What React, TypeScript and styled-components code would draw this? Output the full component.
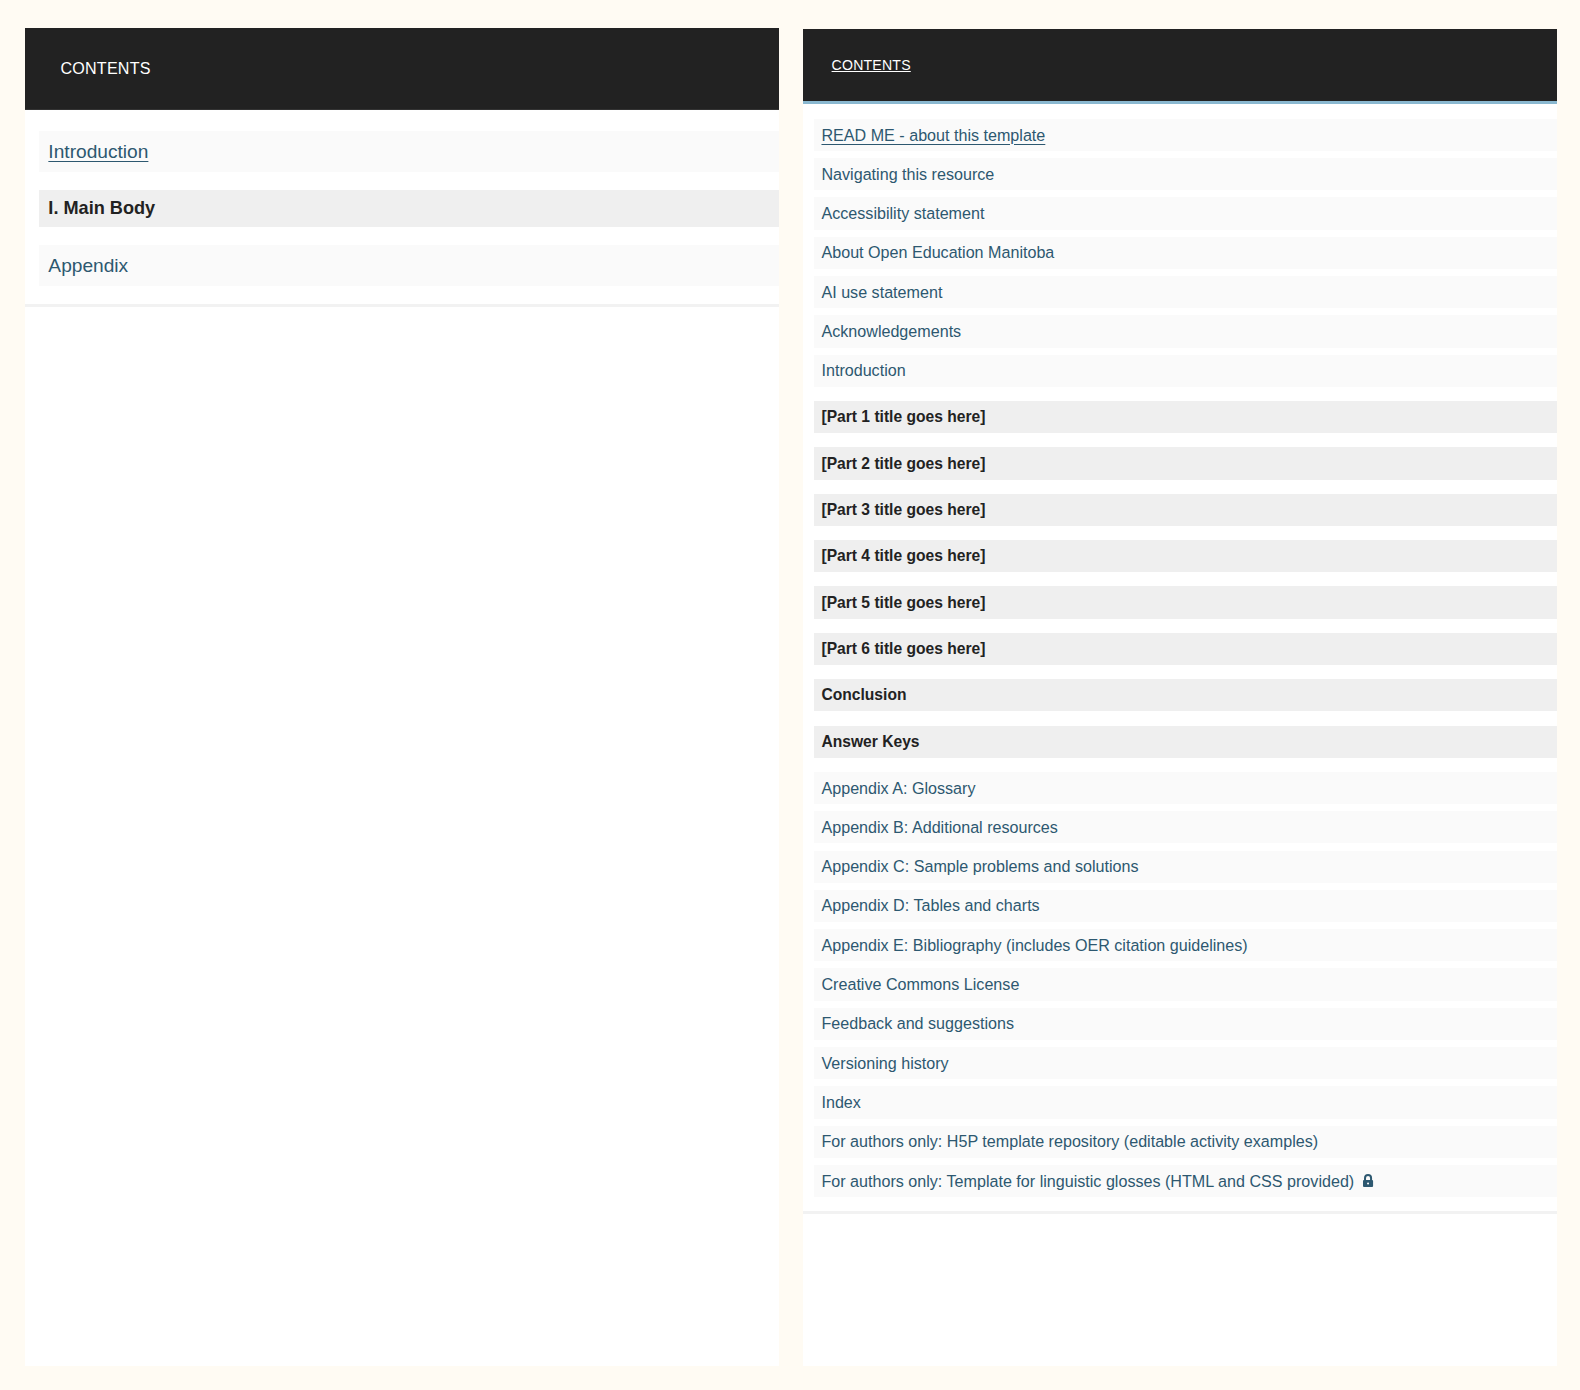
import React from "react";
import styled, { createGlobalStyle } from "styled-components";

const GlobalStyle = createGlobalStyle`
  html, body {
    margin: 0;
    padding: 0;
    background: #fffbf3;
    font-family: "Liberation Sans", Arial, sans-serif;
  }
`;

const Page = styled.div`
  display: grid;
  grid-template-columns: 748px 748px;
  column-gap: 24px;
  padding: 28px 0 0 25px;
  height: 1390px;
  box-sizing: border-box;
  zoom: 1.008;
`;

const Panel = styled.div<{ $top: number }>`
  background: #fff;
  margin-top: ${({ $top }) => $top}px;
  height: ${({ $top }) => 1327 - $top}px;
  display: flex;
  flex-direction: column;
`;

const Header = styled.div<{ $big?: boolean }>`
  background: #222;
  color: #fff;
  display: flex;
  align-items: center;
  height: ${({ $big }) => ($big ? "80px" : "71px")};
  padding-left: ${({ $big }) => ($big ? "35px" : "28px")};
  font-size: ${({ $big }) => ($big ? "16px" : "14px")};
  border-bottom: ${({ $big }) => ($big ? "1px solid #333" : "3px solid #8ab8d0")};
  text-decoration: ${({ $big }) => ($big ? "none" : "underline")};
  letter-spacing: 0.2px;
`;

const List = styled.ul<{ $big?: boolean }>`
  list-style: none;
  margin: 0;
  padding: ${({ $big }) => ($big ? "21px 0 18px 14px" : "15px 0 14px 11px")};
  border-bottom: 3px solid #f2f2f2;
`;

const Item = styled.li<{ $part?: boolean; $big?: boolean }>`
  display: flex;
  align-items: center;
  background: ${({ $part }) => ($part ? "#efefef" : "#fafafa")};
  color: ${({ $part }) => ($part ? "#222" : "#2d5870")};
  font-weight: ${({ $part }) => ($part ? "bold" : "normal")};
  font-size: ${({ $big, $part }) => ($big ? ($part ? "18px" : "19px") : $part ? "15.5px" : "16px")};
  height: ${({ $big, $part }) => ($big ? ($part ? "36px" : "41px") : "32px")};
  padding-left: ${({ $big }) => ($big ? "9px" : "7px")};
  margin: ${({ $big, $part }) =>
    $big ? "0 0 18px" : $part ? "14px 0" : "0 0 7px"};
  &:last-child {
    margin-bottom: 0;
  }
`;

const Link = styled.span`
  text-decoration: underline;
  text-underline-offset: 3px;
`;

const Lock = () => (
  <svg width="12" height="13" viewBox="0 0 12 13" style={{ marginLeft: 8 }}>
    <path d="M3 6V4a3 3 0 0 1 6 0v2" stroke="#2d5870" strokeWidth="2" fill="none" />
    <rect x="1" y="6" width="10" height="7" rx="1" fill="#2d5870" />
    <circle cx="6" cy="9.5" r="1" fill="#fff" />
  </svg>
);

const rightItems: [string, boolean][] = [
  ["Navigating this resource", false],
  ["Accessibility statement", false],
  ["About Open Education Manitoba", false],
  ["AI use statement", false],
  ["Acknowledgements", false],
  ["Introduction", false],
  ["[Part 1 title goes here]", true],
  ["[Part 2 title goes here]", true],
  ["[Part 3 title goes here]", true],
  ["[Part 4 title goes here]", true],
  ["[Part 5 title goes here]", true],
  ["[Part 6 title goes here]", true],
  ["Conclusion", true],
  ["Answer Keys", true],
  ["Appendix A: Glossary", false],
  ["Appendix B: Additional resources", false],
  ["Appendix C: Sample problems and solutions", false],
  ["Appendix D: Tables and charts", false],
  ["Appendix E: Bibliography (includes OER citation guidelines)", false],
  ["Creative Commons License", false],
  ["Feedback and suggestions", false],
  ["Versioning history", false],
  ["Index", false],
  ["For authors only: H5P template repository (editable activity examples)", false],
];

export default function App() {
  return (
    <>
      <GlobalStyle />
      <Page>
        <Panel $top={0}>
          <Header $big>CONTENTS</Header>
          <List $big>
            <Item $big>
              <Link>Introduction</Link>
            </Item>
            <Item $big $part>
              I. Main Body
            </Item>
            <Item $big>Appendix</Item>
          </List>
        </Panel>
        <Panel $top={1}>
          <Header>CONTENTS</Header>
          <List>
            <Item>
              <Link>READ ME - about this template</Link>
            </Item>
            {rightItems.map(([t, p]) => (
              <Item key={t} $part={p}>
                {t}
              </Item>
            ))}
            <Item>
              For authors only: Template for linguistic glosses (HTML and CSS provided)
              <Lock />
            </Item>
          </List>
        </Panel>
      </Page>
    </>
  );
}
